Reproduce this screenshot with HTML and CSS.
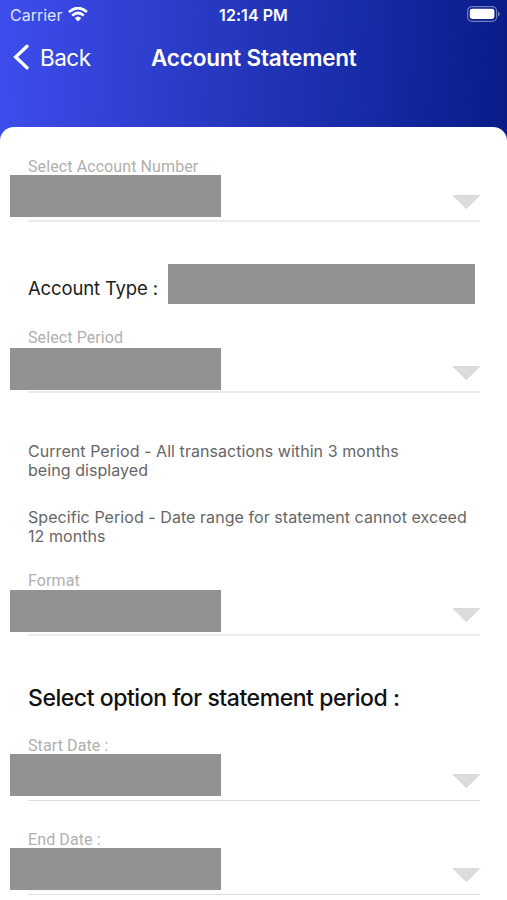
FILE: index.html
```html
<!DOCTYPE html>
<html lang="en">
<head>
<meta charset="utf-8">
<title>Account Statement</title>
<link rel="stylesheet" href="styles.css">
</head>
<body>
<div class="screen">
  <header class="header">
    <div class="status">
      <div class="carrier"><span>Carrier</span>
        <svg class="wifi" width="20" height="15" viewBox="0 0 20 15" fill="none" stroke="#fff" stroke-width="2.7"><path d="M1 5.1Q10-3 19 5.1"/><path d="M4.2 8.6Q10 3.4 15.8 8.6"/><path d="M6.8 11.2Q10 8 13.2 11.2L10 14.5z" fill="#fff" stroke="none"/></svg>
      </div>
      <time class="time">12:14 PM</time>
      <svg class="battery" width="33" height="16" viewBox="0 0 33 16"><rect x=".6" y=".6" width="29" height="14.8" rx="4.4" fill="none" stroke="#fff" stroke-opacity=".42" stroke-width="1.2"/><rect x="2.8" y="2.8" width="24.6" height="10.2" rx="2.4" fill="#fff"/><path d="M31 5.5q1.8.8 1.8 2.5t-1.8 2.5z" fill="#fff" fill-opacity=".45"/></svg>
    </div>
    <nav class="nav">
      <a class="back"><svg width="18" height="26" viewBox="0 0 18 26" fill="none" stroke="#fff" stroke-width="3.3" stroke-linecap="round" stroke-linejoin="miter"><path d="M15 2.2 3.6 13 15 23.8"/></svg><span>Back</span></a>
      <h1 class="title">Account Statement</h1>
    </nav>
  </header>
  <main class="sheet">
    <section class="field">
      <div class="label">Select Account Number</div>
      <div class="row"><div class="mask"></div><svg class="caret" width="28" height="14" viewBox="0 0 28 14"><path d="M1 .5h26.7L14.4 13.7z"/></svg></div>
    </section>
    <section class="type"><span class="type-label">Account Type :</span><div class="type-value"></div></section>
    <section class="field period">
      <div class="label">Select Period</div>
      <div class="row"><div class="mask"></div><svg class="caret" width="28" height="14" viewBox="0 0 28 14"><path d="M1 .5h26.7L14.4 13.7z"/></svg></div>
    </section>
    <section class="notes">
      <p class="note">Current Period - All transactions within 3 months<br>being displayed</p>
      <p class="note note-range">Specific Period - Date range for statement cannot exceed<br>12 months</p>
    </section>
    <section class="field format">
      <div class="label">Format</div>
      <div class="row"><div class="mask"></div><svg class="caret" width="28" height="14" viewBox="0 0 28 14"><path d="M1 .5h26.7L14.4 13.7z"/></svg></div>
    </section>
    <h2 class="heading">Select option for statement period :</h2>
    <section class="field date">
      <div class="label">Start Date :</div>
      <div class="row"><div class="mask"></div><svg class="caret" width="28" height="14" viewBox="0 0 28 14"><path d="M1 .5h26.7L14.4 13.7z"/></svg></div>
    </section>
    <section class="field date end">
      <div class="label">End Date :</div>
      <div class="row"><div class="mask"></div><svg class="caret" width="28" height="14" viewBox="0 0 28 14"><path d="M1 .5h26.7L14.4 13.7z"/></svg></div>
    </section>
  </main>
</div>
</body>
</html>
```
FILE: styles.css
```css
* { box-sizing: border-box; }
body { margin: 0; font-family: Inter, "Liberation Sans", sans-serif; }
.screen {
  width: 507px; height: 900px; overflow: hidden;
  background: linear-gradient(93deg, #3e4eed 0, #3443d8 100px, #2437bd 240px, #162ba5 370px, #091c89 510px) 0 0 / 507px 150px no-repeat;
}
.header { height: 127px; color: #fff; }
.status { display: grid; grid-template-columns: 1fr auto 1fr; align-items: center; height: 29px; padding: 0 7px 0 10px; }
.carrier { display: flex; align-items: center; gap: 6px; font-size: 16px; color: #dfe3ff; }
.time { font-size: 16px; font-weight: 600; letter-spacing: .05px; margin-right: 3px; }
.battery { justify-self: end; margin-top: -1px; }
.nav { display: grid; grid-template-columns: 139px 1fr; align-items: center; height: 56px; padding-left: 12px; }
.back { display: flex; align-items: center; gap: 10px; font-size: 22.5px; letter-spacing: -.5px; }
.title { margin: 0; font-size: 22.5px; font-weight: 600; letter-spacing: -.2px; white-space: nowrap; }
.sheet { height: 773px; padding: 30px 27px 0 28px; background: #fff; border-radius: 14px 14px 0 0; }
.field, .type { width: 452px; }
.field { height: 65px; border-bottom: 2px solid #ebebeb; }
.label { height: 18px; line-height: 19px; font-family: Roboto, sans-serif; font-size: 16px; color: #b0b0b0; letter-spacing: .1px; white-space: nowrap; }
.row { display: flex; justify-content: space-between; align-items: flex-start; }
.mask { width: 211px; height: 42px; margin-left: -18px; background: #929292; }
.caret { margin-top: 20px; flex: none; fill: #dedbdb; stroke: #d2cfcf; stroke-width: .7; }
.type { display: flex; height: 40px; margin-top: 42px; }
.type-label { width: 140px; padding-top: 10px; font-size: 18.5px; line-height: 28px; letter-spacing: -.15px; color: #1c1c1c; white-space: nowrap; }
.type-value { width: 307px; height: 40px; background: #929292; }
.period { margin-top: 24px; }
.period .label { height: 20px; }
.period .caret { margin-top: 18px; }
.notes { padding-top: 49px; }
.note { margin: 0; font-size: 16px; line-height: 19px; color: #666; letter-spacing: .06px; white-space: nowrap; }
.note-range { margin-top: 28px; }
.format { margin-top: 25px; }
.format .label { height: 19px; }
.format .caret { margin-top: 18px; }
.heading { height: 34px; margin: 45px 0 21px; font-size: 23px; font-weight: 500; line-height: 34px; letter-spacing: -.45px; color: #111; white-space: nowrap; }
.date { border-bottom-width: 1px; border-color: #dedede; }
.end { margin-top: 29px; }
```
